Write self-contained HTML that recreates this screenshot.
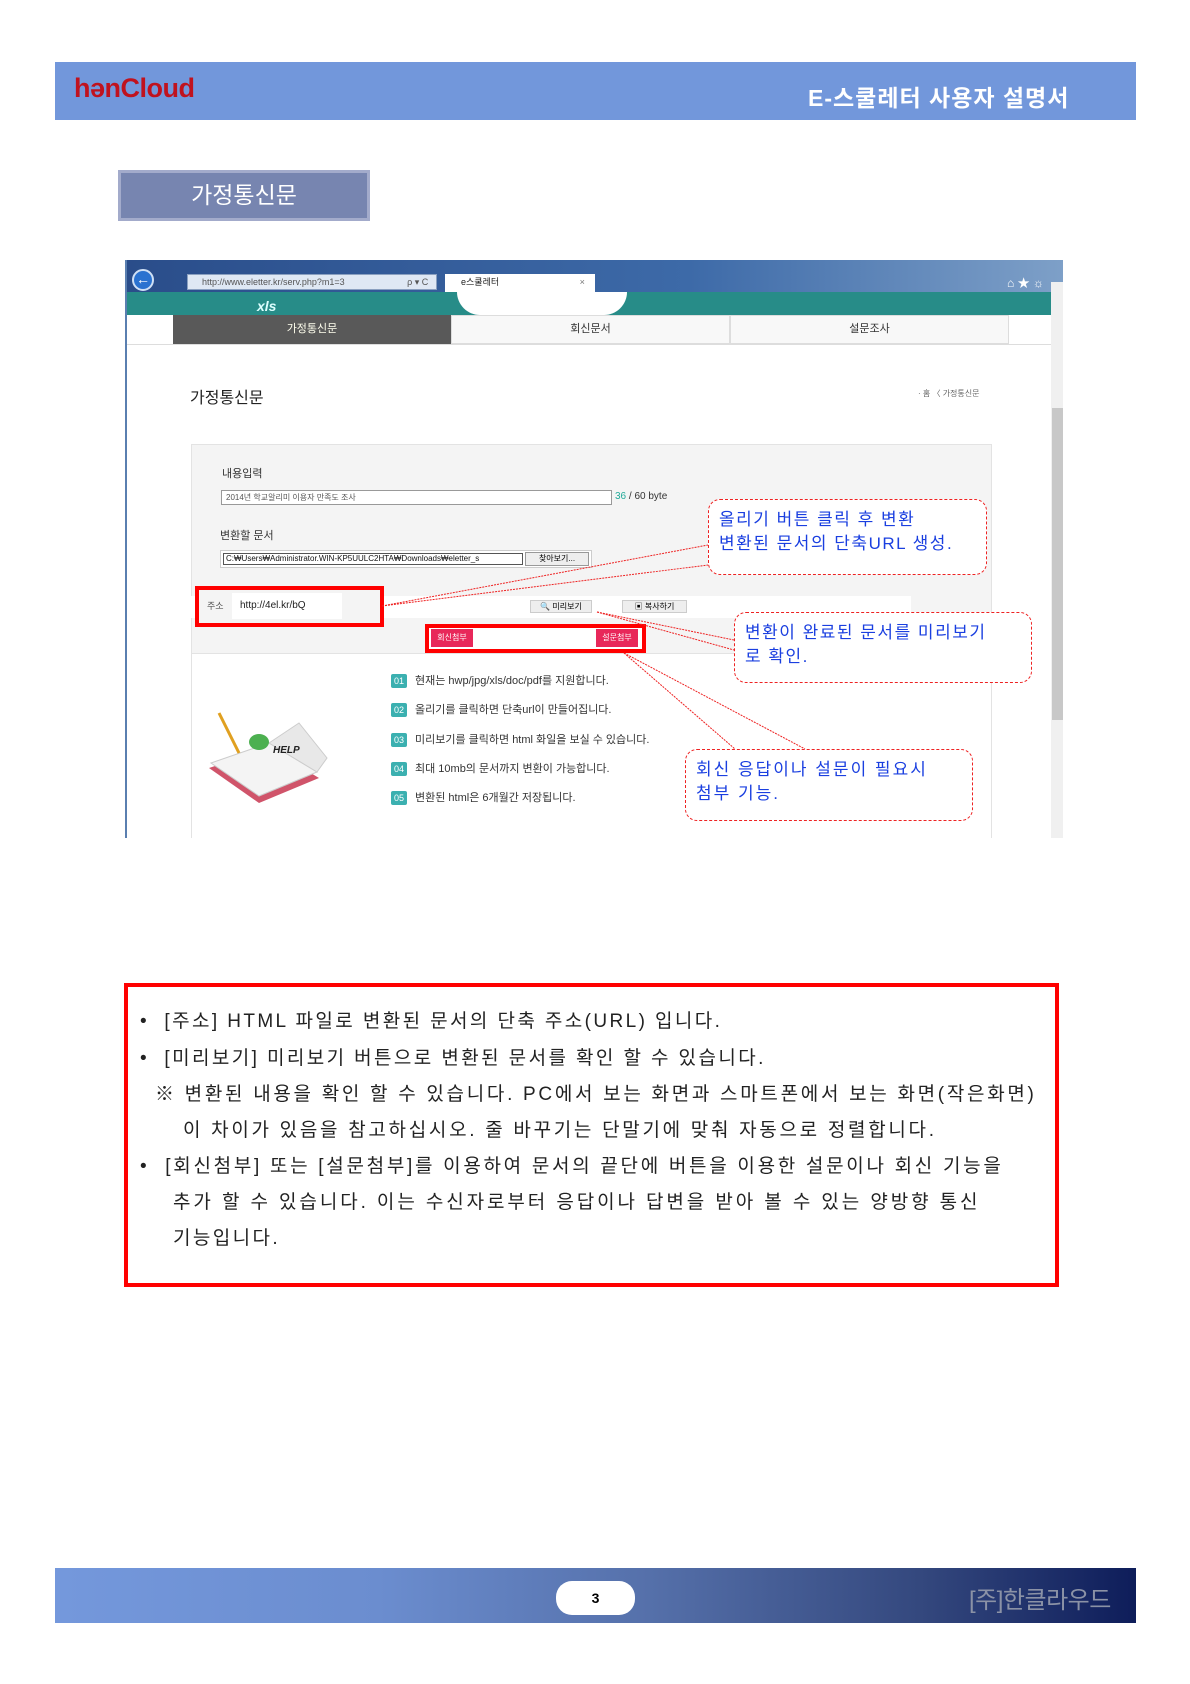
<!DOCTYPE html>
<html><head><meta charset="utf-8"><style>
*{margin:0;padding:0;box-sizing:border-box}
body{width:1190px;height:1684px;background:#fff;position:relative;font-family:"Liberation Sans","Noto Sans CJK KR",sans-serif;overflow:hidden}
.a{position:absolute;white-space:nowrap}
.co{position:absolute;border:1px dashed #e22;border-radius:12px;color:#1a3fe0;font-size:17px;letter-spacing:2px;line-height:24px;padding:8px 10px;background:#fff;white-space:nowrap}
.li{position:absolute;font-size:11px;color:#333}
.li b{display:inline-block;width:16px;height:14px;background:#3bb0b0;color:#fff;font-size:9px;text-align:center;line-height:14px;border-radius:2px;margin-right:8px;font-weight:normal}
.bt{position:absolute;color:#222;font-size:19px;letter-spacing:2.4px}
</style></head><body>
<div class="a" style="left:55px;top:62px;width:1081px;height:58px;background:#7297db"></div>
<div class="a" style="left:74px;top:73px;font-size:27px;font-weight:bold;color:#c0121e;letter-spacing:-0.5px">hənCloud</div>
<div class="a" style="left:808px;top:79px;font-size:23px;font-weight:bold;color:#fff;letter-spacing:1px">E-스쿨레터 사용자 설명서</div>
<div class="a" style="left:118px;top:170px;width:252px;height:51px;background:#7785b0;border:3px solid #a3abcb;color:#fff;font-size:23px;text-align:center;line-height:45px">가정통신문</div>

<div class="a" style="left:125px;top:260px;width:938px;height:578px;background:#fff;border-left:2px solid #5a7fb0;overflow:hidden">
 <div class="a" style="left:0;top:0;width:938px;height:32px;background:linear-gradient(90deg,#2a4d8a,#3d6aa8 60%,#7ea0c8)"></div>
 <div class="a" style="left:5px;top:9px;width:22px;height:22px;border-radius:50%;background:#2a72d0;border:2px solid #cfe0f5;color:#fff;font-size:14px;text-align:center;line-height:17px">←</div>
 <div class="a" style="left:60px;top:14px;width:250px;height:16px;background:#dfe8f4;border:1px solid #8aa0c0;font-size:9px;color:#555;padding-left:14px;line-height:14px">http://www.eletter.kr/serv.php?m1=3 &nbsp;&nbsp;&nbsp;&nbsp;&nbsp;&nbsp;&nbsp;&nbsp;&nbsp;&nbsp;&nbsp;&nbsp;&nbsp;&nbsp;&nbsp;&nbsp;&nbsp;&nbsp;&nbsp;&nbsp;&nbsp;&nbsp;&nbsp;&nbsp;ρ ▾ C</div>
 <div class="a" style="left:318px;top:14px;width:150px;height:18px;background:#fff;font-size:9px;color:#222;padding-left:16px;line-height:17px">e스쿨레터 <span style="margin-left:78px;color:#777">×</span></div>
 <div class="a" style="left:880px;top:14px;color:#fff;font-size:12px">⌂ ★ ☼</div>
 <div class="a" style="left:0;top:32px;width:925px;height:23px;background:#278c88"></div>
 <div class="a" style="left:330px;top:32px;width:170px;height:23px;background:#fff;border-radius:0 0 60px 60px"></div>
 <div class="a" style="left:130px;top:38px;color:#dff;font-style:italic;font-weight:bold;font-size:14px">xls</div>
 <div class="a" style="left:46px;top:55px;width:278px;height:29px;background:#595959;color:#ffe;font-size:11px;text-align:center;line-height:29px">가정통신문</div>
 <div class="a" style="left:324px;top:55px;width:279px;height:29px;background:#f8f8f8;border:1px solid #ddd;font-size:11px;text-align:center;line-height:27px;color:#333">회신문서</div>
 <div class="a" style="left:603px;top:55px;width:279px;height:29px;background:#f8f8f8;border:1px solid #ddd;font-size:11px;text-align:center;line-height:27px;color:#333">설문조사</div>
 <div class="a" style="left:0;top:84px;width:925px;height:1px;background:#ddd"></div>
 <div class="a" style="left:924px;top:22px;width:14px;height:556px;background:#f0f0f0"></div>
 <div class="a" style="left:925px;top:148px;width:12px;height:312px;background:#c8c8c8"></div>
 <div class="a" style="left:63px;top:124px;font-size:16px;color:#222">가정통신문</div>
 <div class="a" style="left:791px;top:128px;font-size:8px;color:#666">· 홈 〈 가정통신문</div>
 <div class="a" style="left:64px;top:184px;width:801px;height:210px;background:#f4f4f4;border:1px solid #e3e3e3"></div>
 <div class="a" style="left:64px;top:393px;width:801px;height:200px;border-left:1px solid #e3e3e3;border-right:1px solid #e3e3e3"></div>
 <div class="a" style="left:95px;top:205px;font-size:11px;color:#333">내용입력</div>
 <div class="a" style="left:94px;top:230px;width:391px;height:15px;background:#fff;border:1px solid #999;font-size:8px;color:#555;padding-left:4px;line-height:13px">2014년 학교알리미 이용자 만족도 조사</div>
 <div class="a" style="left:488px;top:231px;font-size:10px;color:#333"><span style="color:#2a9">36</span> / 60 byte</div>
 <div class="a" style="left:93px;top:267px;font-size:11px;color:#333">변환할 문서</div>
 <div class="a" style="left:93px;top:290px;width:372px;height:18px;border:1px solid #ccc;background:#fff"></div>
 <div class="a" style="left:96px;top:293px;width:300px;height:12px;border:1px solid #555;font-size:8px;color:#111;padding-left:2px;line-height:10px;overflow:hidden">C:₩Users₩Administrator.WIN-KP5UULC2HTA₩Downloads₩eletter_s</div>
 <div class="a" style="left:398px;top:292px;width:64px;height:14px;background:#eee;border:1px solid #999;font-size:8px;text-align:center;line-height:12px">찾아보기...</div>
 <div class="a" style="left:64px;top:336px;width:720px;height:22px;background:#fff"></div>
 <div class="a" style="left:403px;top:340px;width:62px;height:13px;background:#eee;border:1px solid #ccc;font-size:8px;text-align:center;line-height:11px">🔍 미리보기</div>
 <div class="a" style="left:495px;top:340px;width:65px;height:13px;background:#eee;border:1px solid #ccc;font-size:8px;text-align:center;line-height:11px">▣ 복사하기</div>
 <div class="a" style="left:68px;top:326px;width:189px;height:41px;border:4px solid #f00;background:#f4f4f4"></div>
 <div class="a" style="left:80px;top:339px;font-size:9px;color:#555">주소</div>
 <div class="a" style="left:105px;top:333px;width:110px;height:26px;background:#fff;font-size:10px;color:#222;line-height:26px;padding-left:8px">http://4el.kr/bQ</div>
 <div class="a" style="left:298px;top:364px;width:221px;height:29px;border:4px solid #f00;background:#fff"></div>
 <div class="a" style="left:304px;top:369px;width:42px;height:18px;background:#e8285a;color:#fff;font-size:8px;text-align:center;line-height:18px">회신첨부</div>
 <div class="a" style="left:469px;top:369px;width:42px;height:18px;background:#e8285a;color:#fff;font-size:8px;text-align:center;line-height:18px">설문첨부</div>
 <div class="li" style="left:264px;top:412px"><b>01</b>현재는 hwp/jpg/xls/doc/pdf를 지원합니다.</div>
 <div class="li" style="left:264px;top:441px"><b>02</b>올리기를 클릭하면 단축url이 만들어집니다.</div>
 <div class="li" style="left:264px;top:471px"><b>03</b>미리보기를 클릭하면 html 화일을 보실 수 있습니다.</div>
 <div class="li" style="left:264px;top:500px"><b>04</b>최대 10mb의 문서까지 변환이 가능합니다.</div>
 <div class="li" style="left:264px;top:529px"><b>05</b>변환된 html은 6개월간 저장됩니다.</div>
 <svg class="a" style="left:72px;top:448px" width="150" height="100"><polygon points="10,60 70,40 120,70 60,95" fill="#d0546a"/><polygon points="12,55 70,35 118,64 60,88" fill="#f4f4f4" stroke="#ccc"/><polygon points="70,35 100,15 128,50 118,64" fill="#e8e8e8" stroke="#ccc"/><line x1="20" y1="5" x2="40" y2="45" stroke="#e0a020" stroke-width="3"/><ellipse cx="60" cy="34" rx="10" ry="8" fill="#4cb050"/><text x="74" y="45" font-size="10" font-style="italic" font-weight="bold" fill="#222">HELP</text></svg>
</div>
<svg class="a" style="left:0;top:0" width="1190" height="900">
<g stroke="#e22" stroke-width="1" stroke-dasharray="2,1" fill="none">
<line x1="382" y1="606" x2="708" y2="545"/><line x1="382" y1="606" x2="708" y2="565"/>
<line x1="597" y1="612" x2="734" y2="640"/><line x1="597" y1="612" x2="734" y2="650"/>
<line x1="624" y1="653" x2="735" y2="749"/><line x1="624" y1="653" x2="805" y2="749"/>
</g></svg>
<div class="co" style="left:708px;top:499px;width:279px;height:76px;letter-spacing:1.5px">올리기 버튼 클릭 후 변환<br>변환된 문서의 단축URL 생성.</div>
<div class="co" style="left:734px;top:612px;width:298px;height:71px;letter-spacing:1.5px">변환이 완료된 문서를 미리보기<br>로 확인.</div>
<div class="co" style="left:685px;top:749px;width:288px;height:72px">회신 응답이나 설문이 필요시<br>첨부 기능.</div>

<div class="a" style="left:124px;top:983px;width:935px;height:304px;border:4px solid #f00"></div>
<div class="bt" style="left:140px;top:1006px">•&nbsp;&nbsp;[주소] HTML 파일로 변환된 문서의 단축 주소(URL) 입니다.</div>
<div class="bt" style="left:140px;top:1043px">•&nbsp;&nbsp;[미리보기] 미리보기 버튼으로 변환된 문서를 확인 할 수 있습니다.</div>
<div class="bt" style="left:155px;top:1079px;letter-spacing:2.7px">※ 변환된 내용을 확인 할 수 있습니다. PC에서 보는 화면과 스마트폰에서 보는 화면(작은화면)</div>
<div class="bt" style="left:183px;top:1115px;letter-spacing:2.7px">이 차이가 있음을 참고하십시오. 줄 바꾸기는 단말기에 맞춰 자동으로 정렬합니다.</div>
<div class="bt" style="left:140px;top:1151px;letter-spacing:2.7px">•&nbsp;&nbsp;[회신첨부] 또는 [설문첨부]를 이용하여 문서의 끝단에 버튼을 이용한 설문이나 회신 기능을</div>
<div class="bt" style="left:173px;top:1187px;letter-spacing:2.9px">추가 할 수 있습니다. 이는 수신자로부터 응답이나 답변을 받아 볼 수 있는 양방향 통신</div>
<div class="bt" style="left:173px;top:1223px">기능입니다.</div>

<div class="a" style="left:55px;top:1568px;width:1081px;height:55px;background:linear-gradient(90deg,#7498dc 0%,#6b8dcf 30%,#5570aa 55%,#34487e 80%,#0e1d5a 100%)"></div>
<div class="a" style="left:556px;top:1581px;width:79px;height:34px;background:#fff;border-radius:16px;text-align:center;line-height:34px;font-size:14px;font-weight:bold">3</div>
<div class="a" style="left:969px;top:1580px;font-size:24px;color:#8b92a6;letter-spacing:-0.5px">[주]한클라우드</div>
</body></html>
